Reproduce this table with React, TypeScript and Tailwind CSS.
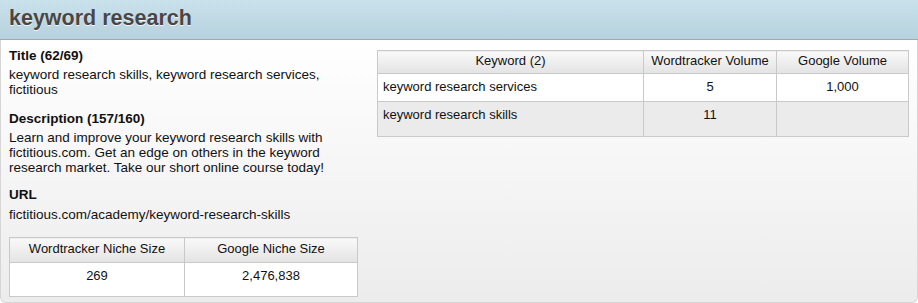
import React from "react";

const font = { fontFamily: '"Liberation Sans", Arial, Helvetica, sans-serif' };

function Th({ children, className = "" }: { children: React.ReactNode; className?: string }) {
  return (
    <th
      className={
        "border border-[#c9c9c9] bg-gradient-to-b from-[#f9f9f9] to-[#e3e3e3] font-normal text-[13px] leading-[15px] text-[#111] text-center align-top " +
        className
      }
    >
      {children}
    </th>
  );
}

export default function App() {
  return (
    <div style={font} className="w-[918px] h-[303px] flex flex-col bg-white overflow-hidden">
      <div className="h-[40px] shrink-0 bg-gradient-to-b from-[#c9e1eb] to-[#b6d2de] border-b border-[#a3a9ac] pl-[9px]">
        <h1 className="text-[21.5px] font-bold leading-[25px] pt-[6px] text-[#4a4646] [text-shadow:0_1px_0_rgba(255,255,255,0.8)]">
          keyword research
        </h1>
      </div>
      <div className="flex-1 flex bg-gradient-to-b from-white to-[#ececec] border-x border-b border-[#d6d6d6] rounded-b-[6px] pl-[8px] pt-[8px]">
        <div className="w-[348px] shrink-0 text-[#111]">
          <div className="text-[13.5px] font-bold leading-[15px] mb-[4px]">Title (62/69)</div>
          <div className="text-[13.5px] leading-[15px] mb-[14px]">
            keyword research skills, keyword research services, fictitious
          </div>
          <div className="text-[13.5px] font-bold leading-[15px] mb-[4px]">Description (157/160)</div>
          <div className="text-[13.5px] leading-[15px] mb-[12px]">
            Learn and improve your keyword research skills with fictitious.com. Get an edge on others in the keyword
            research market. Take our short online course today!
          </div>
          <div className="text-[13.5px] font-bold leading-[15px] mb-[5px]">URL</div>
          <div className="text-[13.5px] leading-[15px] mb-[15px]">fictitious.com/academy/keyword-research-skills</div>
          <table className="w-[348px] table-fixed border-collapse">
            <colgroup>
              <col className="w-[175px]" />
              <col className="w-[173px]" />
            </colgroup>
            <thead>
              <tr className="h-[25px]">
                <Th className="pt-[3px]">Wordtracker Niche Size</Th>
                <Th className="pt-[3px]">Google Niche Size</Th>
              </tr>
            </thead>
            <tbody>
              <tr className="h-[34px] bg-white">
                <td className="border border-[#c9c9c9] text-center align-top pt-[5px] text-[13px] leading-[15px] text-[#111]">
                  269
                </td>
                <td className="border border-[#c9c9c9] text-center align-top pt-[5px] text-[13px] leading-[15px] text-[#111]">
                  2,476,838
                </td>
              </tr>
            </tbody>
          </table>
        </div>
        <div className="ml-[20px] mt-[2px]">
          <table className="w-[531px] table-fixed border-collapse">
            <colgroup>
              <col className="w-[266px]" />
              <col className="w-[133px]" />
              <col className="w-[132px]" />
            </colgroup>
            <thead>
              <tr className="h-[23px]">
                <Th className="pt-[2px]">Keyword (2)</Th>
                <Th className="pt-[2px]">Wordtracker Volume</Th>
                <Th className="pt-[2px]">Google Volume</Th>
              </tr>
            </thead>
            <tbody className="text-[13px] leading-[15px] text-[#111]">
              <tr className="h-[28px] bg-white">
                <td className="border border-[#c9c9c9] align-top pt-[5px] pl-[5px]">keyword research services</td>
                <td className="border border-[#c9c9c9] align-top pt-[5px] text-center">5</td>
                <td className="border border-[#c9c9c9] align-top pt-[5px] text-center">1,000</td>
              </tr>
              <tr className="h-[35px] bg-[#ebebeb]">
                <td className="border border-[#c9c9c9] align-top pt-[5px] pl-[5px]">keyword research skills</td>
                <td className="border border-[#c9c9c9] align-top pt-[5px] text-center">11</td>
                <td className="border border-[#c9c9c9] align-top pt-[5px] text-center"></td>
              </tr>
            </tbody>
          </table>
        </div>
      </div>
    </div>
  );
}
